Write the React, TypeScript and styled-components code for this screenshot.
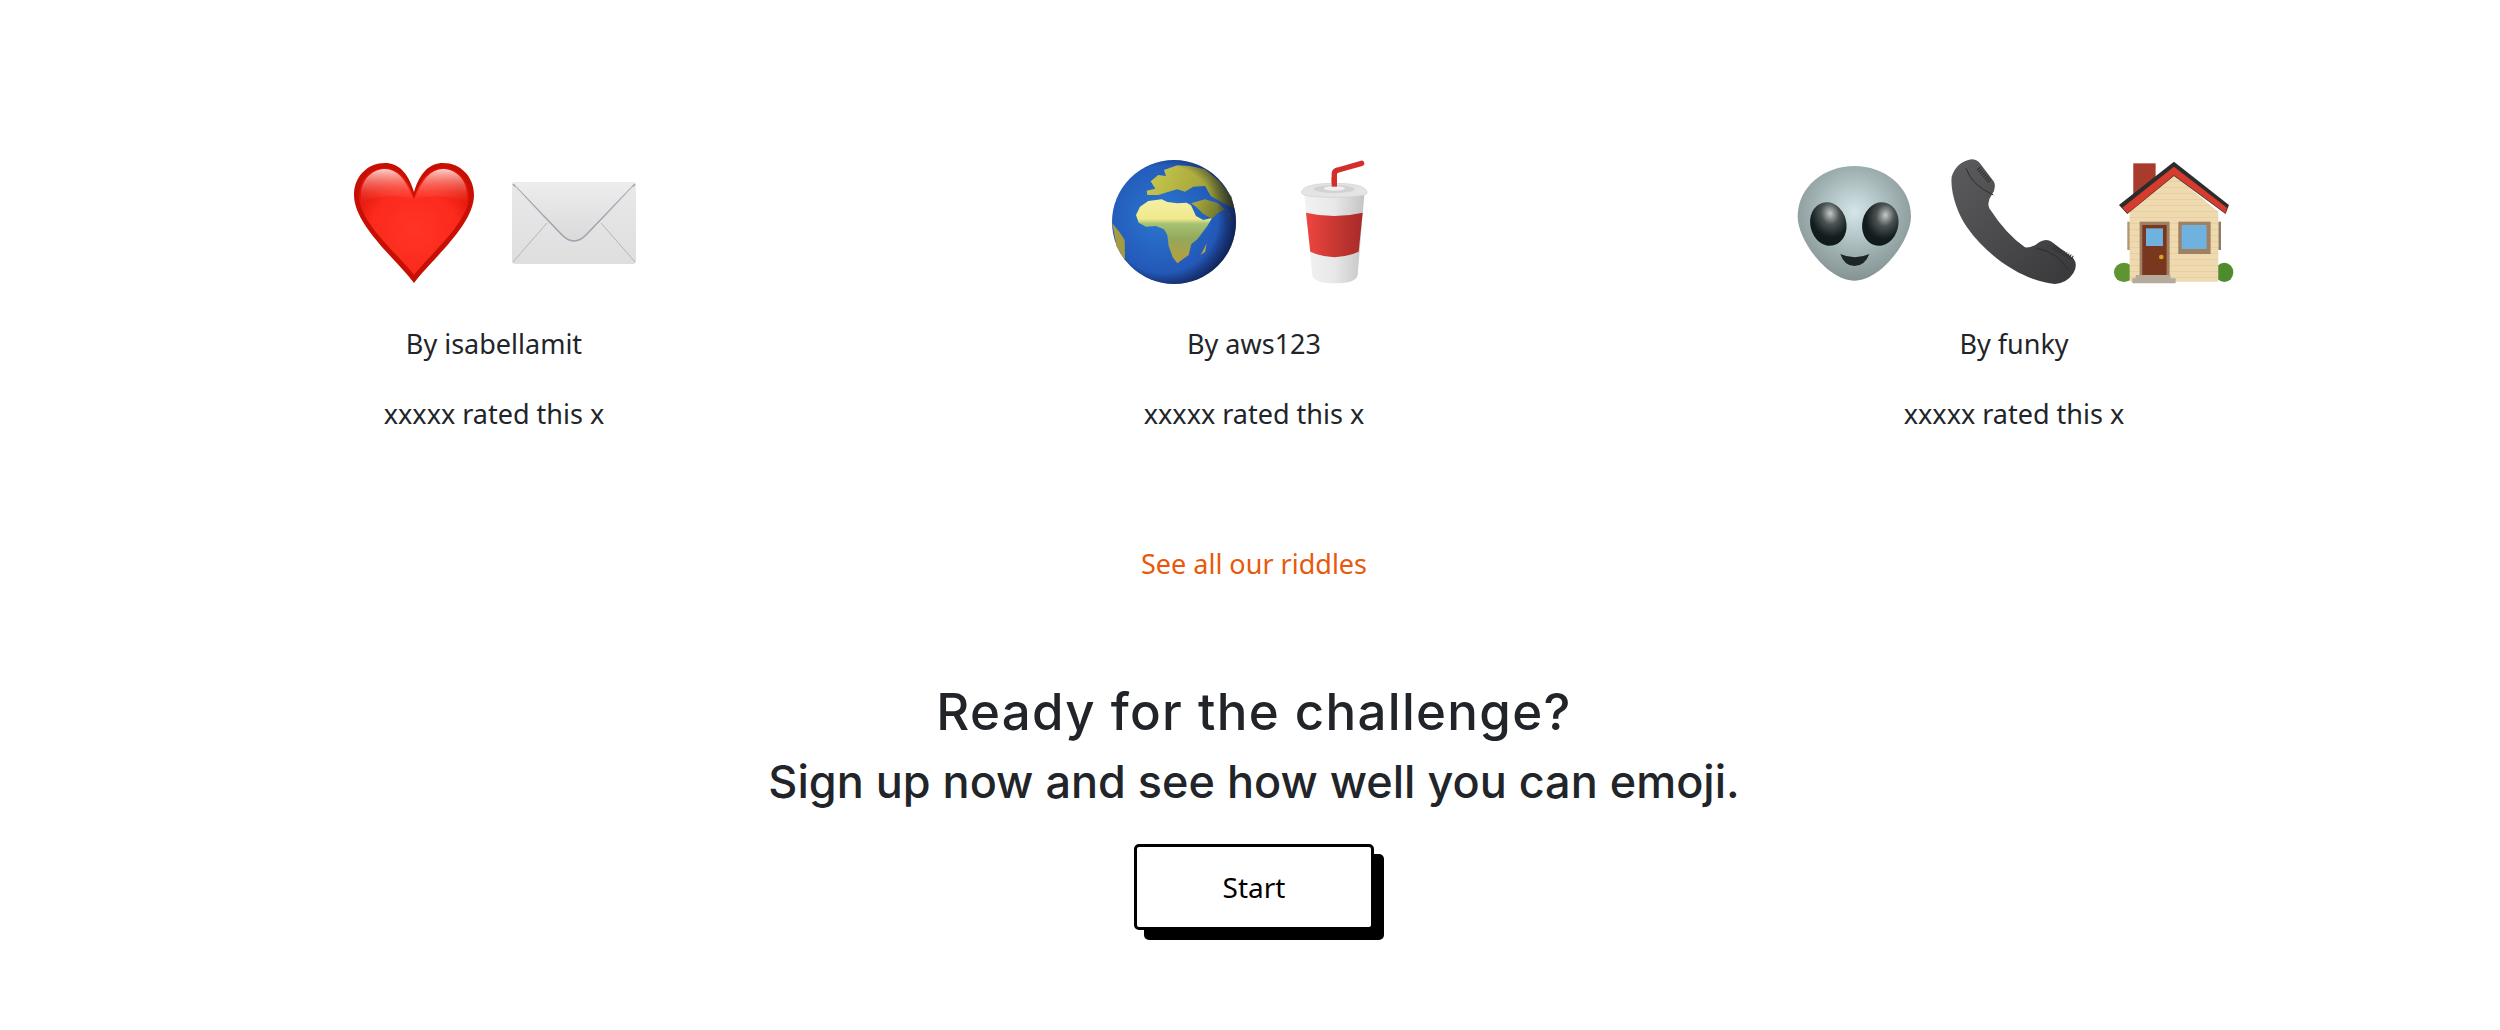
import React from "react";
import styled, { createGlobalStyle } from "styled-components";

const GlobalStyle = createGlobalStyle`
  html, body {
    margin: 0;
    padding: 0;
    background: #fff;
  }
  body {
    font-family: "Noto Sans", "Lato", sans-serif;
    color: #212529;
  }
`;

const HeartEmoji = () => (
  <svg viewBox="0 0 128 128" width="128" height="128">
    <defs>
      <radialGradient id="heartFill" cx="50%" cy="58%" r="60%">
        <stop offset="0" stopColor="#ff3526" />
        <stop offset="0.65" stopColor="#fb2a1d" />
        <stop offset="1" stopColor="#e0140a" />
      </radialGradient>
      <linearGradient id="heartShine" x1="0" y1="0" x2="0" y2="1">
        <stop offset="0" stopColor="#ffe6e0" stopOpacity="0.9" />
        <stop offset="1" stopColor="#ff5a48" stopOpacity="0" />
      </linearGradient>
    </defs>
    <path d="M64 124C46 100 4 66 4 36C4 17 18 4 35 4C48 4 58 13 64 33C70 13 80 4 93 4C110 4 124 17 124 36C124 66 82 100 64 124Z" fill="#c70f04" />
    <path d="M64 116C47 94 9 63 9 37C9 20 21 9 35 9C48 9 58 20 64 40C70 20 80 9 93 9C107 9 119 20 119 37C119 63 81 94 64 116Z" fill="url(#heartFill)" />
    <path d="M11 36C11 20 23 10 35 10C47 10 56 20 63 40C50 36 26 36 11 44Z" fill="url(#heartShine)" />
    <path d="M117 36C117 20 105 10 93 10C81 10 72 20 65 40C78 36 102 36 117 44Z" fill="url(#heartShine)" />
  </svg>
);

const EnvelopeEmoji = () => (
  <svg viewBox="0 0 128 128" width="128" height="128">
    <defs>
      <linearGradient id="envBody" x1="0" y1="0" x2="0" y2="1">
        <stop offset="0" stopColor="#e9e9e9" />
        <stop offset="1" stopColor="#dedede" />
      </linearGradient>
      <linearGradient id="envFlap" x1="0" y1="0" x2="0" y2="1">
        <stop offset="0" stopColor="#ededed" />
        <stop offset="1" stopColor="#d9d9d9" />
      </linearGradient>
    </defs>
    <rect x="2" y="23" width="124" height="82" rx="3" fill="url(#envBody)" />
    <path d="M3 103L37 64M125 103L91 64" stroke="#b4b4b4" strokeWidth="1" fill="none" />
    <path d="M3 24H125L76 77C68 85 60 85 52 77Z" fill="url(#envFlap)" />
    <path d="M3 25L52 76C60 84 68 84 76 76L125 25" stroke="#a0a4ac" strokeWidth="1.6" fill="none" />
    <path d="M5 28L52 79C60 87 68 87 76 79L123 28" stroke="#dfe3ea" strokeWidth="1.4" fill="none" />
  </svg>
);

const GlobeEmoji = () => (
  <svg viewBox="0 0 128 128" width="128" height="128">
    <defs>
      <radialGradient id="globeSea" cx="40%" cy="45%" r="65%">
        <stop offset="0" stopColor="#2b78d0" />
        <stop offset="0.7" stopColor="#2359b8" />
        <stop offset="1" stopColor="#1b3f92" />
      </radialGradient>
      <radialGradient id="globeEdge" cx="42%" cy="48%" r="58%">
        <stop offset="0.75" stopColor="#0a1030" stopOpacity="0" />
        <stop offset="1" stopColor="#0a1030" stopOpacity="0.65" />
      </radialGradient>
      <linearGradient id="africaLand" gradientUnits="userSpaceOnUse" x1="0" y1="185" x2="0" y2="370">
        <stop offset="0" stopColor="#f4ef9f" />
        <stop offset="0.28" stopColor="#f1e98c" />
        <stop offset="0.36" stopColor="#a4c373" />
        <stop offset="0.6" stopColor="#94a85a" />
        <stop offset="1" stopColor="#b89e3c" />
      </linearGradient>
      <linearGradient id="northLand" gradientUnits="userSpaceOnUse" x1="170" y1="110" x2="430" y2="230">
        <stop offset="0" stopColor="#c9c84e" />
        <stop offset="0.6" stopColor="#a3a43a" />
        <stop offset="1" stopColor="#4f5a24" />
      </linearGradient>
    </defs>
    <circle cx="64" cy="63" r="62" fill="url(#globeSea)" />
    <g transform="translate(-20 -19) scale(.3333)">
      <path d="M138 225L150 200L175 183L215 178L232 186L262 190L290 188L303 196L318 228L340 240L366 234L352 258L322 298L304 312L296 345L262 370L248 352L236 318L232 285L222 268L198 258L168 260L146 248Z" fill="url(#africaLand)" />
      <path d="M303 190L345 178L385 190L418 222L424 250L408 206L385 218L366 236L340 222L318 200Z" fill="url(#northLand)" />
      <path d="M170 152L196 146L182 124L205 105L228 108L222 90L262 76L300 78L345 88L390 125L425 170L432 205L400 190L362 168L345 138L310 140L285 155L262 148L236 155L205 165L172 165Z" fill="url(#northLand)" />
      <path d="M332 345L350 310L346 335Z" fill="#b2a244" />
      <path d="M67 250L90 278L104 300L105 362L80 320Z" fill="#a59c42" />
      <path d="M345 138L358 165L336 150Z" fill="#2359b8" />
    </g>
    <circle cx="64" cy="63" r="62" fill="url(#globeEdge)" />
  </svg>
);

const CupEmoji = () => (
  <svg viewBox="0 0 128 128" width="128" height="128">
    <defs>
      <linearGradient id="cupBody" x1="0" y1="0" x2="1" y2="0">
        <stop offset="0" stopColor="#f2f2f2" />
        <stop offset="0.5" stopColor="#e8e8e8" />
        <stop offset="1" stopColor="#c4c4c4" />
      </linearGradient>
      <linearGradient id="cupBand" x1="0" y1="0" x2="1" y2="0">
        <stop offset="0" stopColor="#ef4540" />
        <stop offset="0.6" stopColor="#c23530" />
        <stop offset="1" stopColor="#a82a28" />
      </linearGradient>
    </defs>
    <g transform="translate(-179 -19) scale(.3333)">
      <path d="M730 140V102Q730 92 742 90L812 70" stroke="#d22f2b" strokeWidth="16" strokeLinecap="round" fill="none" />
      <path d="M640 165H820L800 405Q796 430 732 430Q668 430 664 405Z" fill="url(#cupBody)" />
      <path d="M645 218Q730 238 815 218L803 335Q730 368 658 335Z" fill="url(#cupBand)" />
      <path d="M632 155Q640 130 730 130Q820 130 828 155V160Q820 172 730 172Q640 172 632 160Z" fill="#e4e4e4" stroke="#cfcfcf" strokeWidth="2" />
      <ellipse cx="730" cy="147" rx="62" ry="12" fill="#d2d2d2" />
      <ellipse cx="730" cy="145" rx="32" ry="7" fill="#efefef" />
      <path d="M730 140V112" stroke="#d22f2b" strokeWidth="16" fill="none" />
    </g>
  </svg>
);

const AlienEmoji = () => (
  <svg viewBox="0 0 128 128" width="128" height="128">
    <defs>
      <radialGradient id="alienHead" cx="50%" cy="40%" r="62%">
        <stop offset="0" stopColor="#d4e6e8" />
        <stop offset="0.6" stopColor="#9fb0b1" />
        <stop offset="1" stopColor="#828f90" />
      </radialGradient>
      <radialGradient id="alienEyeLeft" cx="62%" cy="28%" r="72%">
        <stop offset="0" stopColor="#c4c8c8" />
        <stop offset="0.35" stopColor="#4a5252" />
        <stop offset="0.75" stopColor="#141d1e" />
        <stop offset="1" stopColor="#101a1b" />
      </radialGradient>
      <radialGradient id="alienEyeRight" cx="58%" cy="28%" r="72%">
        <stop offset="0" stopColor="#c4c8c8" />
        <stop offset="0.35" stopColor="#4a5252" />
        <stop offset="0.75" stopColor="#141d1e" />
        <stop offset="1" stopColor="#101a1b" />
      </radialGradient>
    </defs>
    <g transform="translate(-9 -19) scale(.3333)">
      <path d="M220 78C310 78 390 140 390 230C390 300 300 422 220 422C140 422 50 300 50 230C50 140 130 78 220 78Z" fill="url(#alienHead)" />
      <ellipse cx="142" cy="252" rx="54" ry="66" transform="rotate(-14 142 252)" fill="url(#alienEyeLeft)" />
      <ellipse cx="298" cy="252" rx="54" ry="66" transform="rotate(14 298 252)" fill="url(#alienEyeRight)" />
      <path d="M178 342Q222 362 265 342Q252 378 220 378Q190 378 178 342Z" fill="#1d2526" />
    </g>
  </svg>
);

const PhoneEmoji = () => (
  <svg viewBox="0 0 128 128" width="128" height="128">
    <defs>
      <linearGradient id="phoneBody" x1="0" y1="0" x2="1" y2="1">
        <stop offset="0" stopColor="#5c5c5e" />
        <stop offset="1" stopColor="#38383a" />
      </linearGradient>
    </defs>
    <g transform="translate(-170 -19) scale(.3333)">
      <path d="M515 110Q530 65 575 58Q590 58 600 70L642 125Q650 145 635 165Q620 185 628 205Q680 285 735 322Q755 325 780 305Q800 295 815 305L880 355Q895 375 880 400Q860 430 825 432C740 425 630 360 560 260C535 225 510 160 515 110Z" fill="url(#phoneBody)" />
      <path d="M558 85Q575 135 640 165M770 325Q830 335 865 390" stroke="#2c2c2e" strokeWidth="3" fill="none" />
      <path d="M595 85L630 125M820 322L880 355" stroke="#2f2f31" strokeWidth="14" strokeDasharray="3 4" fill="none" />
    </g>
  </svg>
);

const HouseEmoji = () => (
  <svg viewBox="0 0 128 128" width="128" height="128">
    <defs>
      <pattern id="siding" width="10" height="18" patternUnits="userSpaceOnUse">
        <rect width="10" height="18" fill="#efd9ae" />
        <rect y="16" width="10" height="2" fill="#e2cb9f" />
      </pattern>
    </defs>
    <g transform="translate(-331 -19) scale(.3333)">
      <rect x="1063" y="70" width="67" height="100" fill="#a93b2d" />
      <ellipse cx="1035" cy="397" rx="30" ry="29" fill="#5f9433" />
      <ellipse cx="1336" cy="397" rx="27" ry="29" fill="#4f8a2c" />
      <rect x="1045" y="245" width="8" height="85" fill="#b29674" />
      <rect x="1318" y="245" width="8" height="85" fill="#8f7a5e" />
      <path d="M1052 215L1185 105L1318 215V425H1052Z" fill="url(#siding)" />
      <rect x="1082" y="245" width="90" height="160" fill="#a08063" />
      <rect x="1090" y="255" width="73" height="150" fill="#7a3720" />
      <rect x="1101" y="265" width="51" height="53" fill="#6fb2e0" />
      <circle cx="1147" cy="351" r="7" fill="#e0a020" />
      <rect x="1198" y="245" width="97" height="97" fill="#a08063" />
      <rect x="1208" y="255" width="75" height="72" fill="#6fb2e0" />
      <path d="M1070 405H1175V415H1190V430H1060V415H1070Z" fill="#b5ab9c" />
      <path d="M1020 195L1185 65L1350 195L1340 222L1185 108L1045 222Z" fill="#2c2c2c" />
      <path d="M1030 203L1185 80L1344 203L1340 220L1185 106L1046 220Z" fill="#d63c2e" />
    </g>
  </svg>
);

const riddles = [
  { id: 1, author: "isabellamit", emojis: [<HeartEmoji key="heart" />, <EnvelopeEmoji key="envelope" />] },
  { id: 2, author: "aws123", emojis: [<GlobeEmoji key="globe" />, <CupEmoji key="cup" />] },
  { id: 3, author: "funky", emojis: [<AlienEmoji key="alien" />, <PhoneEmoji key="phone" />, <HouseEmoji key="house" />] },
];

export default function App() {
  return (
    <Root>
      <GlobalStyle />
      <RiddleGrid>
        {riddles.map((riddle) => (
          <RiddleCard key={riddle.id}>
            <EmojiRow>
              {riddle.emojis.map((emoji, index) => (
                <EmojiCell key={index}>{emoji}</EmojiCell>
              ))}
            </EmojiRow>
            <CardLine>By {riddle.author}</CardLine>
            <CardLine>xxxxx rated this x</CardLine>
          </RiddleCard>
        ))}
      </RiddleGrid>
      <AllLink href="#">See all our riddles</AllLink>
      <SignUp>
        <Title>Ready for the challenge?</Title>
        <SubTitle>Sign up now and see how well you can emoji.</SubTitle>
        <StartButton>Start</StartButton>
      </SignUp>
    </Root>
  );
}

const Root = styled.div`
  width: 2500px;
  height: 1030px;
  box-sizing: border-box;
  padding: 159px 0 0 8px;
  display: flex;
  flex-direction: column;
  align-items: center;
  overflow: hidden;
`;

const RiddleGrid = styled.div`
  display: grid;
  grid-template-columns: repeat(3, 760px);
  justify-content: center;
`;

const RiddleCard = styled.div`
  display: flex;
  flex-direction: column;
  align-items: center;
`;

const EmojiRow = styled.div`
  display: flex;
  justify-content: center;
  height: 128px;
  margin-bottom: 22px;
`;

const EmojiCell = styled.div`
  width: 160px;
  height: 128px;
  display: flex;
  justify-content: center;
`;

const CardLine = styled.div`
  font-size: 27px;
  line-height: 70px;
  height: 70px;
`;

const AllLink = styled.a`
  margin-top: 95px;
  font-size: 27px;
  line-height: 40px;
  color: #e8590c;
  text-decoration: none;
`;

const SignUp = styled.div`
  margin-top: 93px;
  display: flex;
  flex-direction: column;
  align-items: center;
`;

const Title = styled.h2`
  margin: 0;
  font-family: "Inter", sans-serif;
  font-size: 51px;
  font-weight: 500;
  line-height: 70px;
  letter-spacing: 1.3px;
  color: #212529;
`;

const SubTitle = styled.h3`
  margin: 0;
  font-family: "Inter", sans-serif;
  font-size: 45px;
  font-weight: 500;
  line-height: 70px;
  color: #212529;
`;

const StartButton = styled.button`
  width: 240px;
  height: 86px;
  margin-top: 27px;
  box-sizing: border-box;
  background: #fff;
  border: 3px solid #000;
  border-radius: 5px;
  box-shadow: 10px 10px 0 #000;
  font-family: inherit;
  font-size: 28px;
  font-weight: 400;
  color: #000;
`;
